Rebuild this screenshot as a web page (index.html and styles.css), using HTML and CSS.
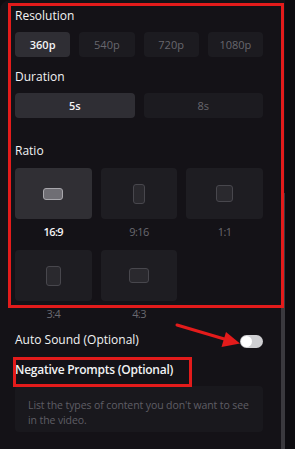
FILE: index.html
```html
<!DOCTYPE html>
<html>
<head>
<meta charset="utf-8">
<link rel="stylesheet" href="styles.css">
</head>
<body>
<div class="panel">
  <div class="label">Resolution</div>
  <div class="row4">
    <div class="opt on">360p</div>
    <div class="opt">540p</div>
    <div class="opt">720p</div>
    <div class="opt">1080p</div>
  </div>
  <div class="label mt-dur">Duration</div>
  <div class="row2">
    <div class="opt on">5s</div>
    <div class="opt">8s</div>
  </div>
  <div class="label mt-ratio">Ratio</div>
  <div class="ratios">
    <div class="ratio on"><div class="tile"><span class="shape s169"></span></div><div class="rlabel">16:9</div></div>
    <div class="ratio"><div class="tile"><span class="shape s916"></span></div><div class="rlabel">9:16</div></div>
    <div class="ratio"><div class="tile"><span class="shape s11"></span></div><div class="rlabel">1:1</div></div>
    <div class="ratio"><div class="tile"><span class="shape s34"></span></div><div class="rlabel">3:4</div></div>
    <div class="ratio"><div class="tile"><span class="shape s43"></span></div><div class="rlabel">4:3</div></div>
  </div>
  <div class="sound">
    <div class="label">Auto Sound (Optional)</div>
    <div class="toggle"><span class="knob"></span></div>
  </div>
  <div class="label strong">Negative Prompts (Optional)</div>
  <div class="area">List the types of content you don't want to see in the video.</div>
  <div class="scrollthumb"></div>
</div>
<div class="mark mark-main"></div>
<div class="mark mark-neg"></div>
<svg class="arrow" width="295" height="449" viewBox="0 0 295 449">
  <line x1="177" y1="325" x2="226" y2="339.5" stroke="#e31b1b" stroke-width="3" stroke-linecap="round"/>
  <polygon points="240,343.5 221.5,347 226,332" fill="#e31b1b"/>
</svg>
</body>
</html>
```
FILE: styles.css
```css
html, body {
  margin: 0;
  padding: 0;
  background: #0d0c10;
}
body {
  width: 295px;
  height: 449px;
  overflow: hidden;
  position: relative;
  font-family: "Open Sans", "Noto Sans", sans-serif;
}
.panel {
  position: relative;
  width: 285px;
  height: 449px;
  box-sizing: border-box;
  background: #141217;
  border-top-left-radius: 10px;
  padding: 8px 22px 0 15px;
}
.label {
  color: #f2f2f4;
  font-size: 12px;
  line-height: 16px;
  font-weight: 500;
  letter-spacing: 0;
}
.strong { font-weight: 600; letter-spacing: -0.25px; }
.mt-dur { margin-top: 12px; }
.mt-ratio { margin-top: 25px; }
.row4 {
  margin-top: 8px;
  display: grid;
  grid-template-columns: repeat(4, 1fr);
  gap: 9px;
}
.row2 {
  margin-top: 8px;
  display: grid;
  grid-template-columns: repeat(2, 1fr);
  gap: 9px;
}
.opt {
  height: 25px;
  border-radius: 4px;
  background: #1c1b20;
  color: #68676e;
  font-size: 11px;
  font-weight: 500;
  display: flex;
  align-items: center;
  justify-content: center;
}
.opt.on {
  background: #2f2e34;
  color: #f4f4f6;
  font-weight: 600;
}
.ratios {
  margin-top: 9px;
  display: grid;
  grid-template-columns: repeat(3, 1fr);
  column-gap: 9px;
  row-gap: 10px;
}
.tile {
  height: 51px;
  border-radius: 4px;
  background: #1e1d22;
  display: flex;
  align-items: center;
  justify-content: center;
}
.ratio.on .tile { background: #302f34; }
.rlabel {
  margin-top: 5px;
  text-align: center;
  font-size: 11px;
  line-height: 16px;
  letter-spacing: -0.6px;
  color: #6a6970;
}
.ratio.on .rlabel { color: #f4f4f6; font-weight: 600; }
.shape {
  display: block;
  box-sizing: border-box;
  border: 1.5px solid #48474d;
  background: #2a292e;
  border-radius: 3px;
}
.ratio.on .shape {
  border-color: #a8a7ac;
  background: #6f6e74;
}
.s169 { width: 20px; height: 12px; }
.s916 { width: 12px; height: 20px; }
.s11 { width: 17px; height: 17px; }
.s34 { width: 15px; height: 20px; }
.s43 { width: 20px; height: 15px; }
.sound {
  margin-top: 10px;
  display: flex;
  align-items: center;
  justify-content: space-between;
}
.toggle {
  width: 23px;
  height: 13px;
  border-radius: 7px;
  background: #cfcfd2;
  position: relative;
  margin-top: 2px;
}
.knob {
  position: absolute;
  left: 1px;
  top: 1px;
  width: 11px;
  height: 11px;
  border-radius: 50%;
  background: #ffffff;
}
.sound + .label { margin-top: 14px; }
.area {
  margin-top: 8px;
  height: 46px;
  box-sizing: border-box;
  border-radius: 4px;
  background: #19181d;
  color: #5f5e65;
  font-size: 10.5px;
  line-height: 15px;
  letter-spacing: -0.1px;
  padding: 12px 8px 0 13px;
}
.scrollthumb {
  position: absolute;
  right: 0;
  top: 193px;
  bottom: 0;
  width: 4px;
  background: #3a393e;
}
.mark {
  position: absolute;
  box-sizing: border-box;
  border: 3px solid #e31b1b;
}
.mark-main { left: 8px; top: 3px; width: 276px; height: 305px; }
.mark-neg { left: 13px; top: 357px; width: 179px; height: 30px; }
.arrow { position: absolute; left: 0; top: 0; }
```
